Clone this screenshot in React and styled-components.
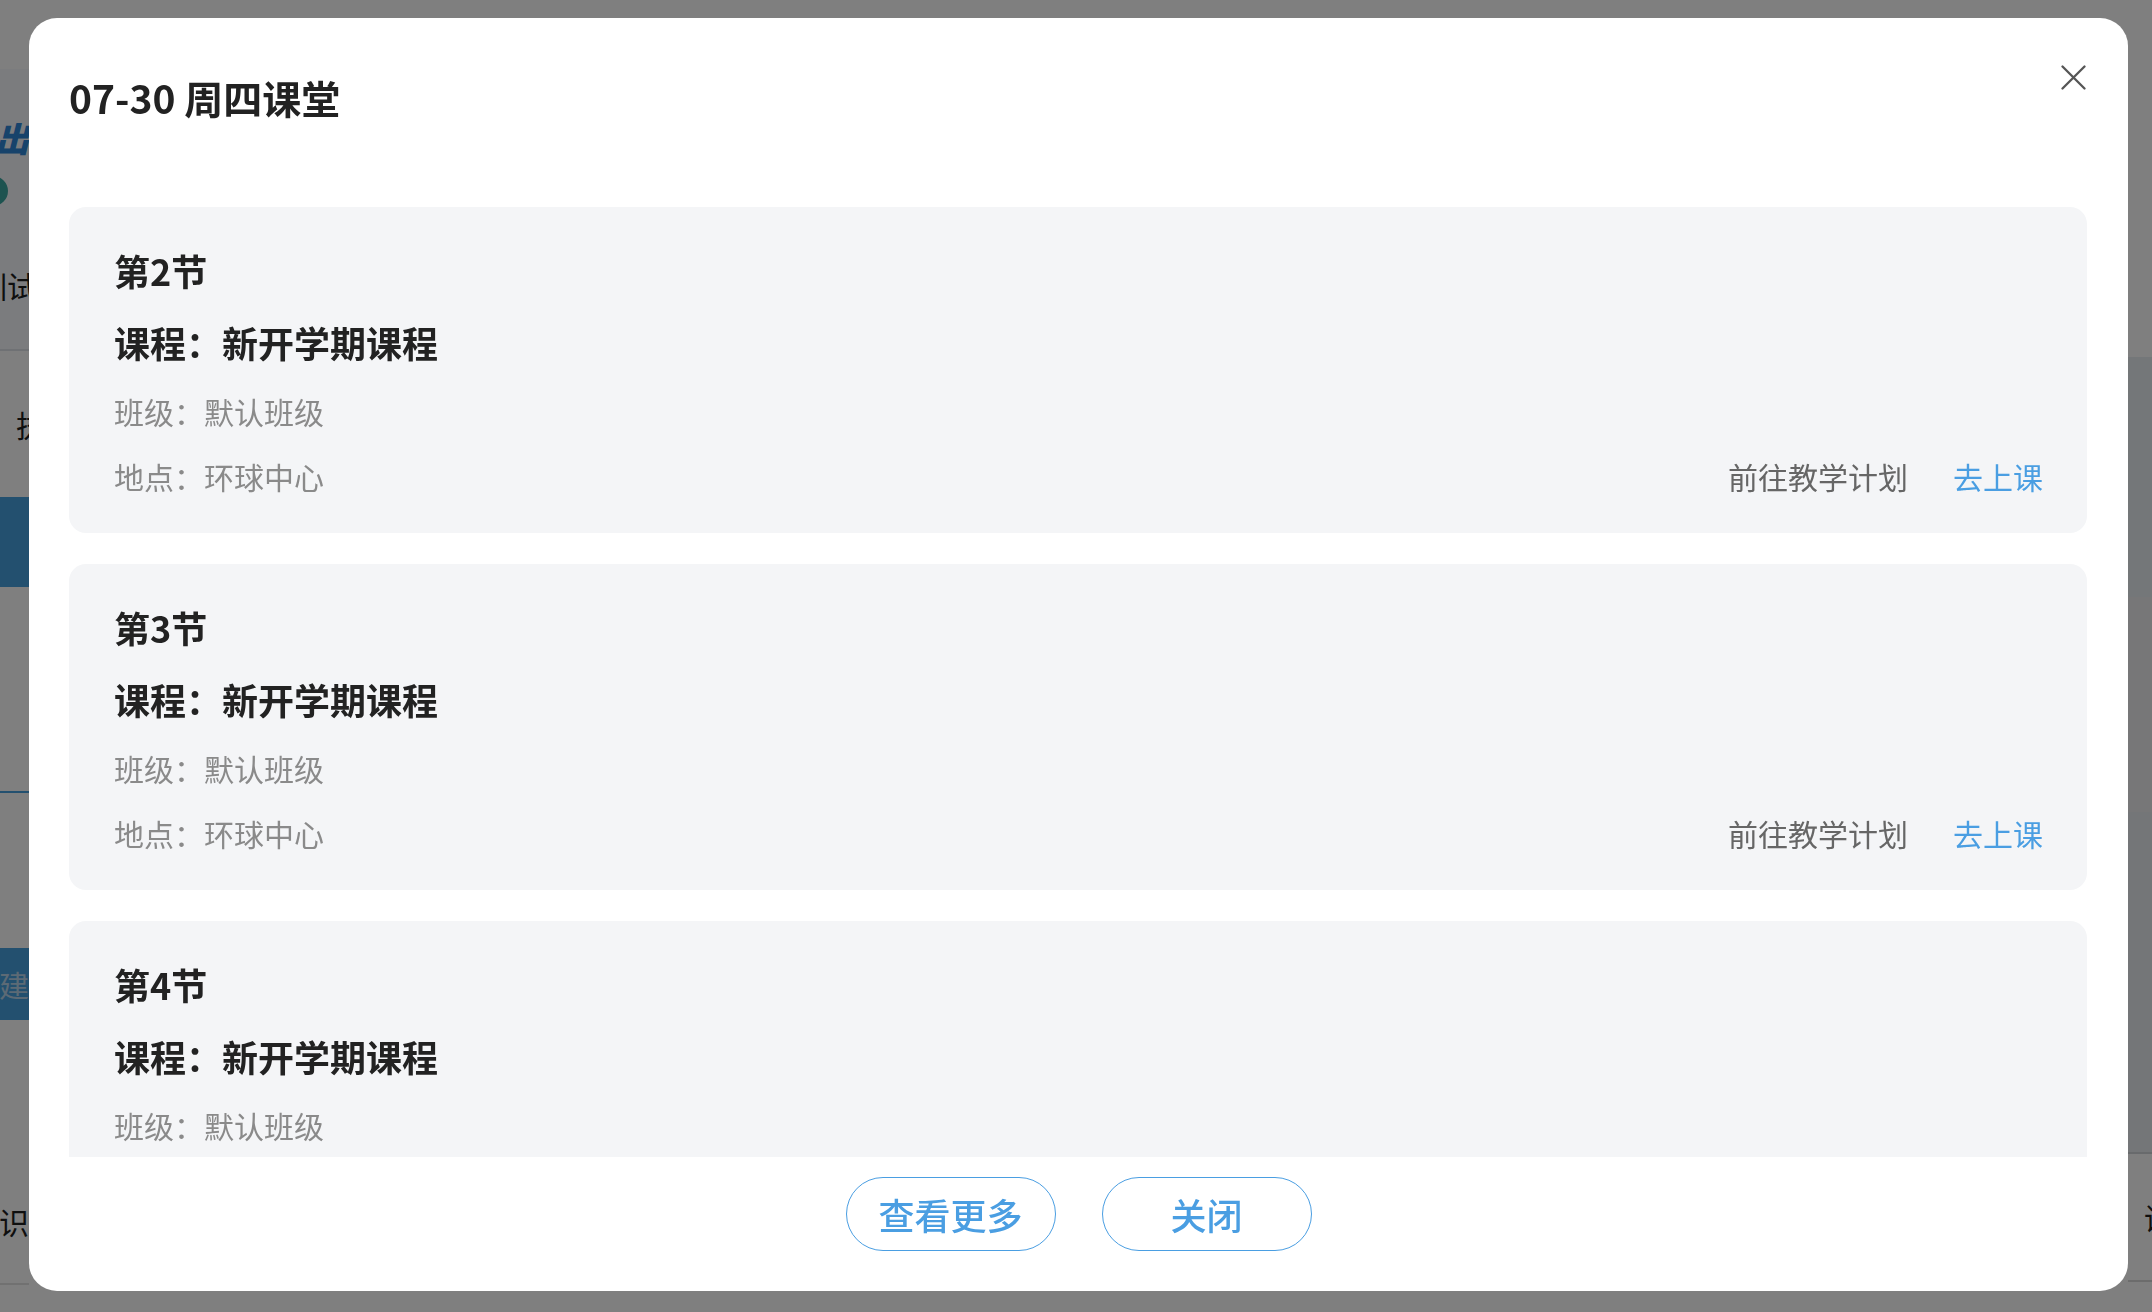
import React from "react"
import styled, { createGlobalStyle } from "styled-components"

const lessons = [
  { no: 2, course: "新开学期课程", klass: "默认班级", place: "环球中心" },
  { no: 3, course: "新开学期课程", klass: "默认班级", place: "环球中心" },
  { no: 4, course: "新开学期课程", klass: "默认班级", place: "环球中心" },
]

const App = () => {
  return (
    <>
      <GlobalStyle />
      <Page>
        <LeftStrip>
          <StripRow h={69} />
          <StripRow h={92} bg="#f6f9fc" align="flex-end">
            <LogoText>世出</LogoText>
          </StripRow>
          <StripRow h={59} bg="#f6f9fc">
            <Dot />
          </StripRow>
          <StripRow h={131} bg="#f6f9fc" border="#dfe3e8" align="center">
            <StripText shift={-8}>训试</StripText>
          </StripRow>
          <StripRow h={146} align="center" start>
            <StripText>执行</StripText>
          </StripRow>
          <StripRow h={90} bg="#46a0de" />
          <StripRow h={206} border="#46a0de" />
          <StripRow h={155} />
          <StripRow h={72} bg="#46a0de" align="center">
            <StripText light>建</StripText>
          </StripRow>
          <StripRow h={138} />
          <StripRow h={127} border="#e3e3e3" align="center">
            <StripText>识</StripText>
          </StripRow>
        </LeftStrip>
        <Middle />
        <RightStrip>
          <StripRow h={357} />
          <StripRow h={240} bg="#e9eef3" />
          <StripRow h={215} bg="#eeeff1" />
          <StripRow h={342} bg="#e9edf1" border="#d0d4d8" />
          <StripRow h={128} border="#d9d9d9" align="center" start>
            <StripText>讲解</StripText>
          </StripRow>
        </RightStrip>
      </Page>

      <Overlay>
        <Modal>
          <Header>
            <Title>07-30 周四课堂</Title>
            <CloseButton aria-label="关闭">
              <svg width="25" height="25" viewBox="0 0 25 25">
                <path d="M1.5 1.5 L23.5 23.5 M23.5 1.5 L1.5 23.5" stroke="#555" strokeWidth="2.3" strokeLinecap="round" />
              </svg>
            </CloseButton>
          </Header>

          <Body>
            {lessons.map((item, index) => (
              <LessonCard key={index}>
                <LessonNo>第{item.no}节</LessonNo>
                <CourseName>课程：{item.course}</CourseName>
                <InfoLine gap={22}>班级：{item.klass}</InfoLine>
                <LocationRow>
                  <InfoLine gap={0}>地点：{item.place}</InfoLine>
                  <Actions>
                    <ActionLink>前往教学计划</ActionLink>
                    <ActionLink primary>去上课</ActionLink>
                  </Actions>
                </LocationRow>
              </LessonCard>
            ))}
          </Body>

          <Footer>
            <OutlineButton>查看更多</OutlineButton>
            <OutlineButton>关闭</OutlineButton>
          </Footer>
        </Modal>
      </Overlay>
    </>
  )
}

export default App

const GlobalStyle = createGlobalStyle`
  * {
    box-sizing: border-box;
  }
  html, body {
    margin: 0;
    padding: 0;
    height: 100%;
    overflow: hidden;
  }
  body {
    font-family: "Noto Sans CJK SC", "Noto Sans", sans-serif;
    background: #fff;
  }
`

const Page = styled.div`
  display: flex;
  width: 100vw;
  height: 100vh;
  background: #fff;
`

const LeftStrip = styled.div`
  width: 29px;
  display: flex;
  flex-direction: column;
  overflow: hidden;
`

const RightStrip = styled.div`
  width: 24px;
  display: flex;
  flex-direction: column;
  overflow: hidden;
`

const Middle = styled.div`
  flex: 1;
`

const StripRow = styled.div`
  flex: 0 0 ${(p) => p.h}px;
  display: flex;
  align-items: ${(p) => p.align || "center"};
  justify-content: ${(p) => (p.start ? "flex-start" : "flex-end")};
  padding-left: ${(p) => (p.start ? "16px" : "0")};
  background: ${(p) => p.bg || "#fff"};
  border-bottom: ${(p) => (p.border ? `2px solid ${p.border}` : "none")};
  overflow: hidden;
`

const LogoText = styled.span`
  font-size: 34px;
  font-weight: 900;
  font-style: italic;
  color: #2f86d6;
  white-space: nowrap;
  line-height: 1;
  margin-bottom: 6px;
`

const Dot = styled.span`
  flex: none;
  width: 30px;
  height: 30px;
  border-radius: 50%;
  background: #3aa6a0;
  margin-right: 21px;
`

const StripText = styled.span`
  font-size: 30px;
  color: ${(p) => (p.light ? "#b9d4ea" : "#1f1f1f")};
  white-space: nowrap;
  line-height: 1;
  margin-right: ${(p) => p.shift || 0}px;
`

const Overlay = styled.div`
  position: fixed;
  inset: 0;
  background: rgba(0, 0, 0, 0.5);
  display: flex;
  align-items: flex-start;
  padding: 18px 24px 0 29px;
`

const Modal = styled.div`
  flex: 1;
  height: 1273px;
  background: #fff;
  border-radius: 28px;
  display: flex;
  flex-direction: column;
  overflow: hidden;
`

const Header = styled.div`
  display: flex;
  justify-content: space-between;
  align-items: flex-start;
  padding: 51px 42px 0 40px;
  margin-bottom: 82px;
`

const Title = styled.h2`
  margin: 0;
  font-size: 39px;
  line-height: 56px;
  font-weight: 700;
  color: #222;
`

const CloseButton = styled.button`
  width: 25px;
  height: 25px;
  margin-top: -4px;
  padding: 0;
  border: none;
  background: none;
  display: flex;
  cursor: pointer;
`

const Body = styled.div`
  flex: 1;
  min-height: 0;
  overflow: hidden;
  padding: 0 41px 0 40px;
  display: flex;
  flex-direction: column;
  gap: 31px;
`

const LessonCard = styled.div`
  flex: none;
  background: #f4f5f7;
  border-radius: 17px;
  padding: 38px 44px 35px 45px;
  display: flex;
  flex-direction: column;
`

const LessonNo = styled.div`
  font-size: 36px;
  line-height: 50px;
  font-weight: 700;
  color: #222;
`

const CourseName = styled.div`
  margin-top: 22px;
  font-size: 36px;
  line-height: 50px;
  font-weight: 700;
  color: #222;
`

const InfoLine = styled.div`
  margin-top: ${(p) => p.gap}px;
  font-size: 30px;
  line-height: 44px;
  color: #8a8a8a;
`

const LocationRow = styled.div`
  margin-top: 21px;
  display: flex;
  justify-content: space-between;
  align-items: center;
`

const Actions = styled.div`
  display: flex;
  gap: 45px;
`

const ActionLink = styled.span`
  font-size: 30px;
  line-height: 44px;
  color: ${(p) => (p.primary ? "#4a9ee2" : "#666")};
  cursor: pointer;
`

const Footer = styled.div`
  flex: 0 0 134px;
  display: flex;
  justify-content: center;
  align-items: flex-start;
  gap: 46px;
  padding-top: 20px;
`

const OutlineButton = styled.button`
  width: 210px;
  height: 74px;
  border: 1.5px solid #4a9ee2;
  border-radius: 37px;
  background: #fff;
  color: #4a9ee2;
  font-family: "Noto Sans CJK SC", sans-serif;
  font-size: 36px;
  font-weight: 500;
  cursor: pointer;
`
